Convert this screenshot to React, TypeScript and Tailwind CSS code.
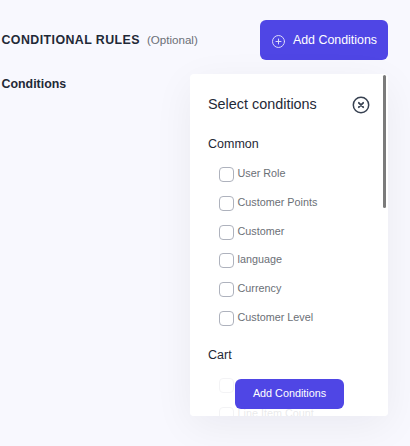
const COMMON = ['User Role', 'Customer Points', 'Customer', 'language', 'Currency', 'Customer Level']
const CART = ['Cart Subtotal', 'Line Item Count']

function PlusCircle() {
  return (
    <svg width="15" height="15" viewBox="0 0 15 15" fill="none" stroke="currentColor" strokeWidth="1" strokeLinecap="round" className="translate-y-[1px] opacity-80">
      <circle cx="7.5" cy="7.5" r="6" />
      <path d="M7.5 5v5M5 7.5h5" />
    </svg>
  )
}

function CloseCircle() {
  return (
    <svg width="18" height="18" viewBox="0 0 18 18" fill="none" stroke="#374151" strokeLinecap="round" className="translate-y-[1px]">
      <circle cx="9" cy="9" r="7.7" strokeWidth="1.5" />
      <path d="M6.8 6.8l4.4 4.4M11.2 6.8l-4.4 4.4" strokeWidth="1.8" />
    </svg>
  )
}

function ConditionRow({ label }: { label: string }) {
  return (
    <label className="flex h-[28.8px] items-start gap-[3.5px] pl-[11px] text-[10.8px] leading-[15px] text-[#6b6f76]">
      <span className="mt-[1px] h-[15px] w-[15px] shrink-0 rounded-[4px] border border-[#aeb2bd] bg-white" />
      <span>{label}</span>
    </label>
  )
}

export default function App() {
  return (
    <div className="relative h-[446px] w-[410px] overflow-hidden bg-[#f8f8fe] font-['Liberation_Sans',sans-serif]">
      <div className="flex items-start justify-between pl-[1.5px] pr-[22px] pt-[20px]">
        <div className="mt-[11px] flex items-baseline gap-[7px]">
          <h2 className="text-[12.4px] leading-[16px] font-bold tracking-[0.42px] text-[#1f2937]">CONDITIONAL RULES</h2>
          <span className="text-[11.6px] text-[#6b6f76]">(Optional)</span>
        </div>
        <button className="flex h-[40px] w-[128px] items-center justify-center gap-[7px] rounded-[6px] bg-[#4f46e5] text-[12.4px] text-white">
          <PlusCircle />
          Add Conditions
        </button>
      </div>

      <p className="mt-[16px] pl-[1.5px] text-[12.4px] leading-[16px] font-bold text-[#1f2937]">Conditions</p>

      {/* Dropdown panel */}
      <div className="absolute left-[190px] top-[74px] h-[342px] w-[198px] overflow-hidden rounded-[4px] bg-white shadow-[0_10px_40px_rgba(17,24,39,0.06)]">
        <div className="px-[18px] pt-[21px]">
          <div className="flex items-center justify-between">
            <span className="text-[14.4px] leading-[18px] text-[#1f2937]">Select conditions</span>
            <CloseCircle />
          </div>
          <h3 className="mt-[23px] mb-[14px] text-[12.5px] leading-[16px] text-[#1f2937]">Common</h3>
          {COMMON.map((name) => (
            <ConditionRow key={name} label={name} />
          ))}
          <h3 className="mt-[8px] mb-[14px] text-[12.5px] leading-[16px] text-[#1f2937]">Cart</h3>
          {CART.map((name) => (
            <ConditionRow key={name} label={name} />
          ))}
        </div>

        {/* Fade over the rows under the button */}
        <div className="absolute inset-x-0 bottom-0 h-[46px] bg-white/85" />
        <div className="absolute right-[2px] top-[1px] h-[133px] w-[3px] rounded-full bg-[#7b7b7b]" />
        <button className="absolute bottom-[7px] left-[45px] h-[30px] w-[109px] rounded-[6px] bg-[#4f46e5] pb-[1px] text-[10.8px] text-white">
          Add Conditions
        </button>
      </div>
    </div>
  )
}
